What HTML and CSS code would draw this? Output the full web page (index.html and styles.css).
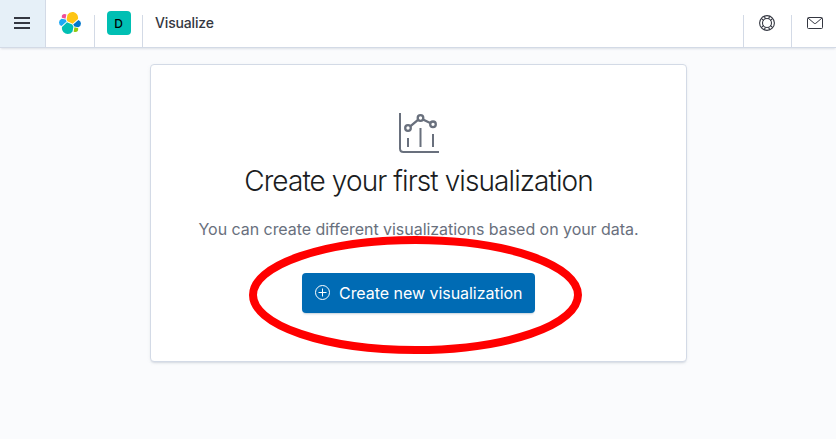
FILE: index.html
```html
<!DOCTYPE html>
<html lang="en">
<head>
<meta charset="utf-8">
<title>Visualize</title>
<link rel="stylesheet" href="styles.css">
</head>
<body>
<header class="header">
  <button class="menu" aria-label="Menu"><svg width="16" height="12" viewBox="0 0 16 12"><path fill="#343741" d="M0 0h16v2H0zM0 5h16v2H0zM0 10h16v2H0z"/></svg></button>
  <a class="item logo"><svg width="24" height="24" viewBox="0 0 32 32">
    <path fill="#fec514" d="M12.58 13.787l7.002 3.211 7.066-6.213a7.849 7.849 0 0 0 .152-1.557c0-4.287-3.477-7.775-7.75-7.775a7.74 7.74 0 0 0-6.397 3.388l-1.176 6.123z"/>
    <path fill="#00bfb3" d="M5.333 21.228A7.964 7.964 0 0 0 5.18 22.8c0 4.3 3.492 7.799 7.785 7.799a7.77 7.77 0 0 0 6.435-3.414l1.166-6.102-1.556-2.985-7.03-3.211z"/>
    <path fill="#f04e98" d="M5.288 9.067l4.8 1.137L11.14 4.73a3.785 3.785 0 0 0-2.302-.785A3.805 3.805 0 0 0 5.039 7.75c0 .452.084.901.249 1.317z"/>
    <path fill="#1ba9f5" d="M4.87 10.214a5.294 5.294 0 0 0-3.515 4.986 5.29 5.29 0 0 0 3.398 4.93l6.734-6.1-1.236-2.65z"/>
    <path fill="#93c90e" d="M20.873 27.177a3.796 3.796 0 0 0 2.285.775 3.805 3.805 0 0 0 3.79-3.805c0-.458-.083-.904-.244-1.317l-4.797-1.125z"/>
    <path fill="#0077cc" d="M21.848 20.563l5.28 1.238a5.302 5.302 0 0 0 3.515-4.987 5.29 5.29 0 0 0-3.388-4.924l-6.91 6.062z"/>
  </svg></a>
  <div class="item space"><span class="avatar">D</span></div>
  <div class="item crumb">Visualize</div>
  <div class="item help"><svg width="16" height="16" viewBox="0 0 16 16" fill="none" stroke="#343741" stroke-width="1.100"><circle cx="8" cy="8" r="7.400"/><circle cx="8" cy="8" r="4.500"/><path d="M5.300 1.200l1.100 2.600M2.300 3.300l2.400 2.300M10.700 1.200l-1.100 2.600M13.700 3.300l-2.400 2.300M5.300 14.800l1.100-2.600M2.300 12.700l2.400-2.300M10.700 14.800l-1.100-2.600M13.700 12.700l-2.400-2.300"/></svg></div>
  <div class="item mail"><svg width="16" height="12" viewBox="0 0 16 12" fill="none" stroke="#343741"><rect x=".5" y=".5" width="15" height="11" rx="1"/><path d="M1 1l6.200 5.300q.8.600 1.600 0L15 1"/></svg></div>
</header>
<main class="page">
  <section class="panel">
    <svg class="chart" width="40" height="40" viewBox="0 0 40 40" fill="none" stroke="#69707d" stroke-width="2">
      <path d="M1 0v35.500q0 3.500 3.500 3.500H40M9 25v9M21.500 15v19M34 21v13"/>
      <path d="M11.500 13.200l7.500-6.400M24 6.400l7.200 3.700" stroke-width="2.300"/>
      <g stroke-width="2.300"><circle cx="9" cy="15" r="2.800"/><circle cx="21.500" cy="5" r="2.800"/><circle cx="34" cy="11.300" r="2.800"/></g>
    </svg>
    <h1 class="title">Create your first visualization</h1>
    <p class="text">You can create different visualizations based on your data.</p>
    <div class="action">
      <button class="button"><svg width="16" height="16" viewBox="0 0 16 16" fill="none" stroke="#fff"><circle cx="7.500" cy="7.500" r="7"/><path d="M7.500 3.500v8M3.500 7.500h8"/></svg><span>Create new visualization</span></button>
      <svg class="ring" width="334" height="118" viewBox="0 0 334 118"><ellipse cx="166.500" cy="59" rx="162.500" ry="55" fill="none" stroke="#f00" stroke-width="8"/></svg>
    </div>
  </section>
</main>
</body>
</html>
```
FILE: styles.css
```css
* { box-sizing: border-box; }
body {
  margin: 0;
  height: 439px;
  overflow: hidden;
  background: #fafbfd;
  color: #343741;
  font-family: Inter, sans-serif;
}
svg { display: block; flex: none; }
button { border: 0; padding: 0; font: inherit; }
.header {
  display: flex;
  align-items: flex-end;
  height: 48px;
  background: #fff;
  border-bottom: 1px solid #d3dae6;
  box-shadow: 0 2px 2px -1px rgba(152, 162, 179, .3);
}
.menu {
  width: 46px;
  height: 47px;
  padding: 17px 0 0 14px;
  background: #e6f0f8;
  border-right: 1px solid #d3dae6;
  align-self: flex-start;
}
.menu svg { margin-bottom: 18px; }
.item {
  display: flex;
  justify-content: center;
  height: 32px;
  border-left: 1px solid #d3dae6;
}
.logo { width: 48px; border-left: 0; }
.logo svg { margin-top: -4px; }
.space { width: 48px; }
.avatar {
  width: 24px;
  height: 24px;
  margin-top: -4px;
  border-radius: 4px;
  background: #00bfb3;
  color: #000;
  font-size: 12px;
  font-weight: 500;
  line-height: 25px;
  text-align: center;
}
.crumb {
  flex: 1;
  justify-content: flex-start;
  padding-left: 12px;
  font-size: 14px;
  font-weight: 500;
  letter-spacing: -.15px;
  line-height: 16px;
}
.help { width: 48px; justify-content: flex-start; padding-left: 15px; }
.mail { width: 45px; justify-content: flex-start; padding-left: 15px; }
.mail svg { margin-top: 2px; }
.page { display: flex; justify-content: center; padding: 16px 0 0 1px; }
.panel {
  display: flex;
  flex-direction: column;
  align-items: center;
  width: 537px;
  height: 298px;
  padding-top: 48px;
  background: #fff;
  border: 1px solid #d3dae6;
  border-radius: 4px;
  box-shadow: 0 2px 2px -1px rgba(152, 162, 179, .3), 0 1px 5px -2px rgba(152, 162, 179, .3);
}
.title {
  margin: 8px 0 0;
  color: #1a1c21;
  font-size: 28px;
  font-weight: 300;
  letter-spacing: -.92px;
  line-height: 40px;
  white-space: nowrap;
}
.text {
  margin: 16px 0 0;
  color: #69707d;
  font-size: 16px;
  letter-spacing: -.045px;
  line-height: 24px;
  white-space: nowrap;
}
.action { position: relative; margin-top: 32px; }
.button {
  display: flex;
  align-items: center;
  gap: 8px;
  width: 233px;
  height: 40px;
  padding-left: 13px;
  background: #006bb4;
  border-radius: 4px;
  color: #fff;
  font-size: 16px;
  letter-spacing: -.04px;
  white-space: nowrap;
  box-shadow: 0 2px 2px -1px rgba(54, 97, 126, .3);
}
.ring { position: absolute; left: -53px; top: -37px; pointer-events: none; }
```
